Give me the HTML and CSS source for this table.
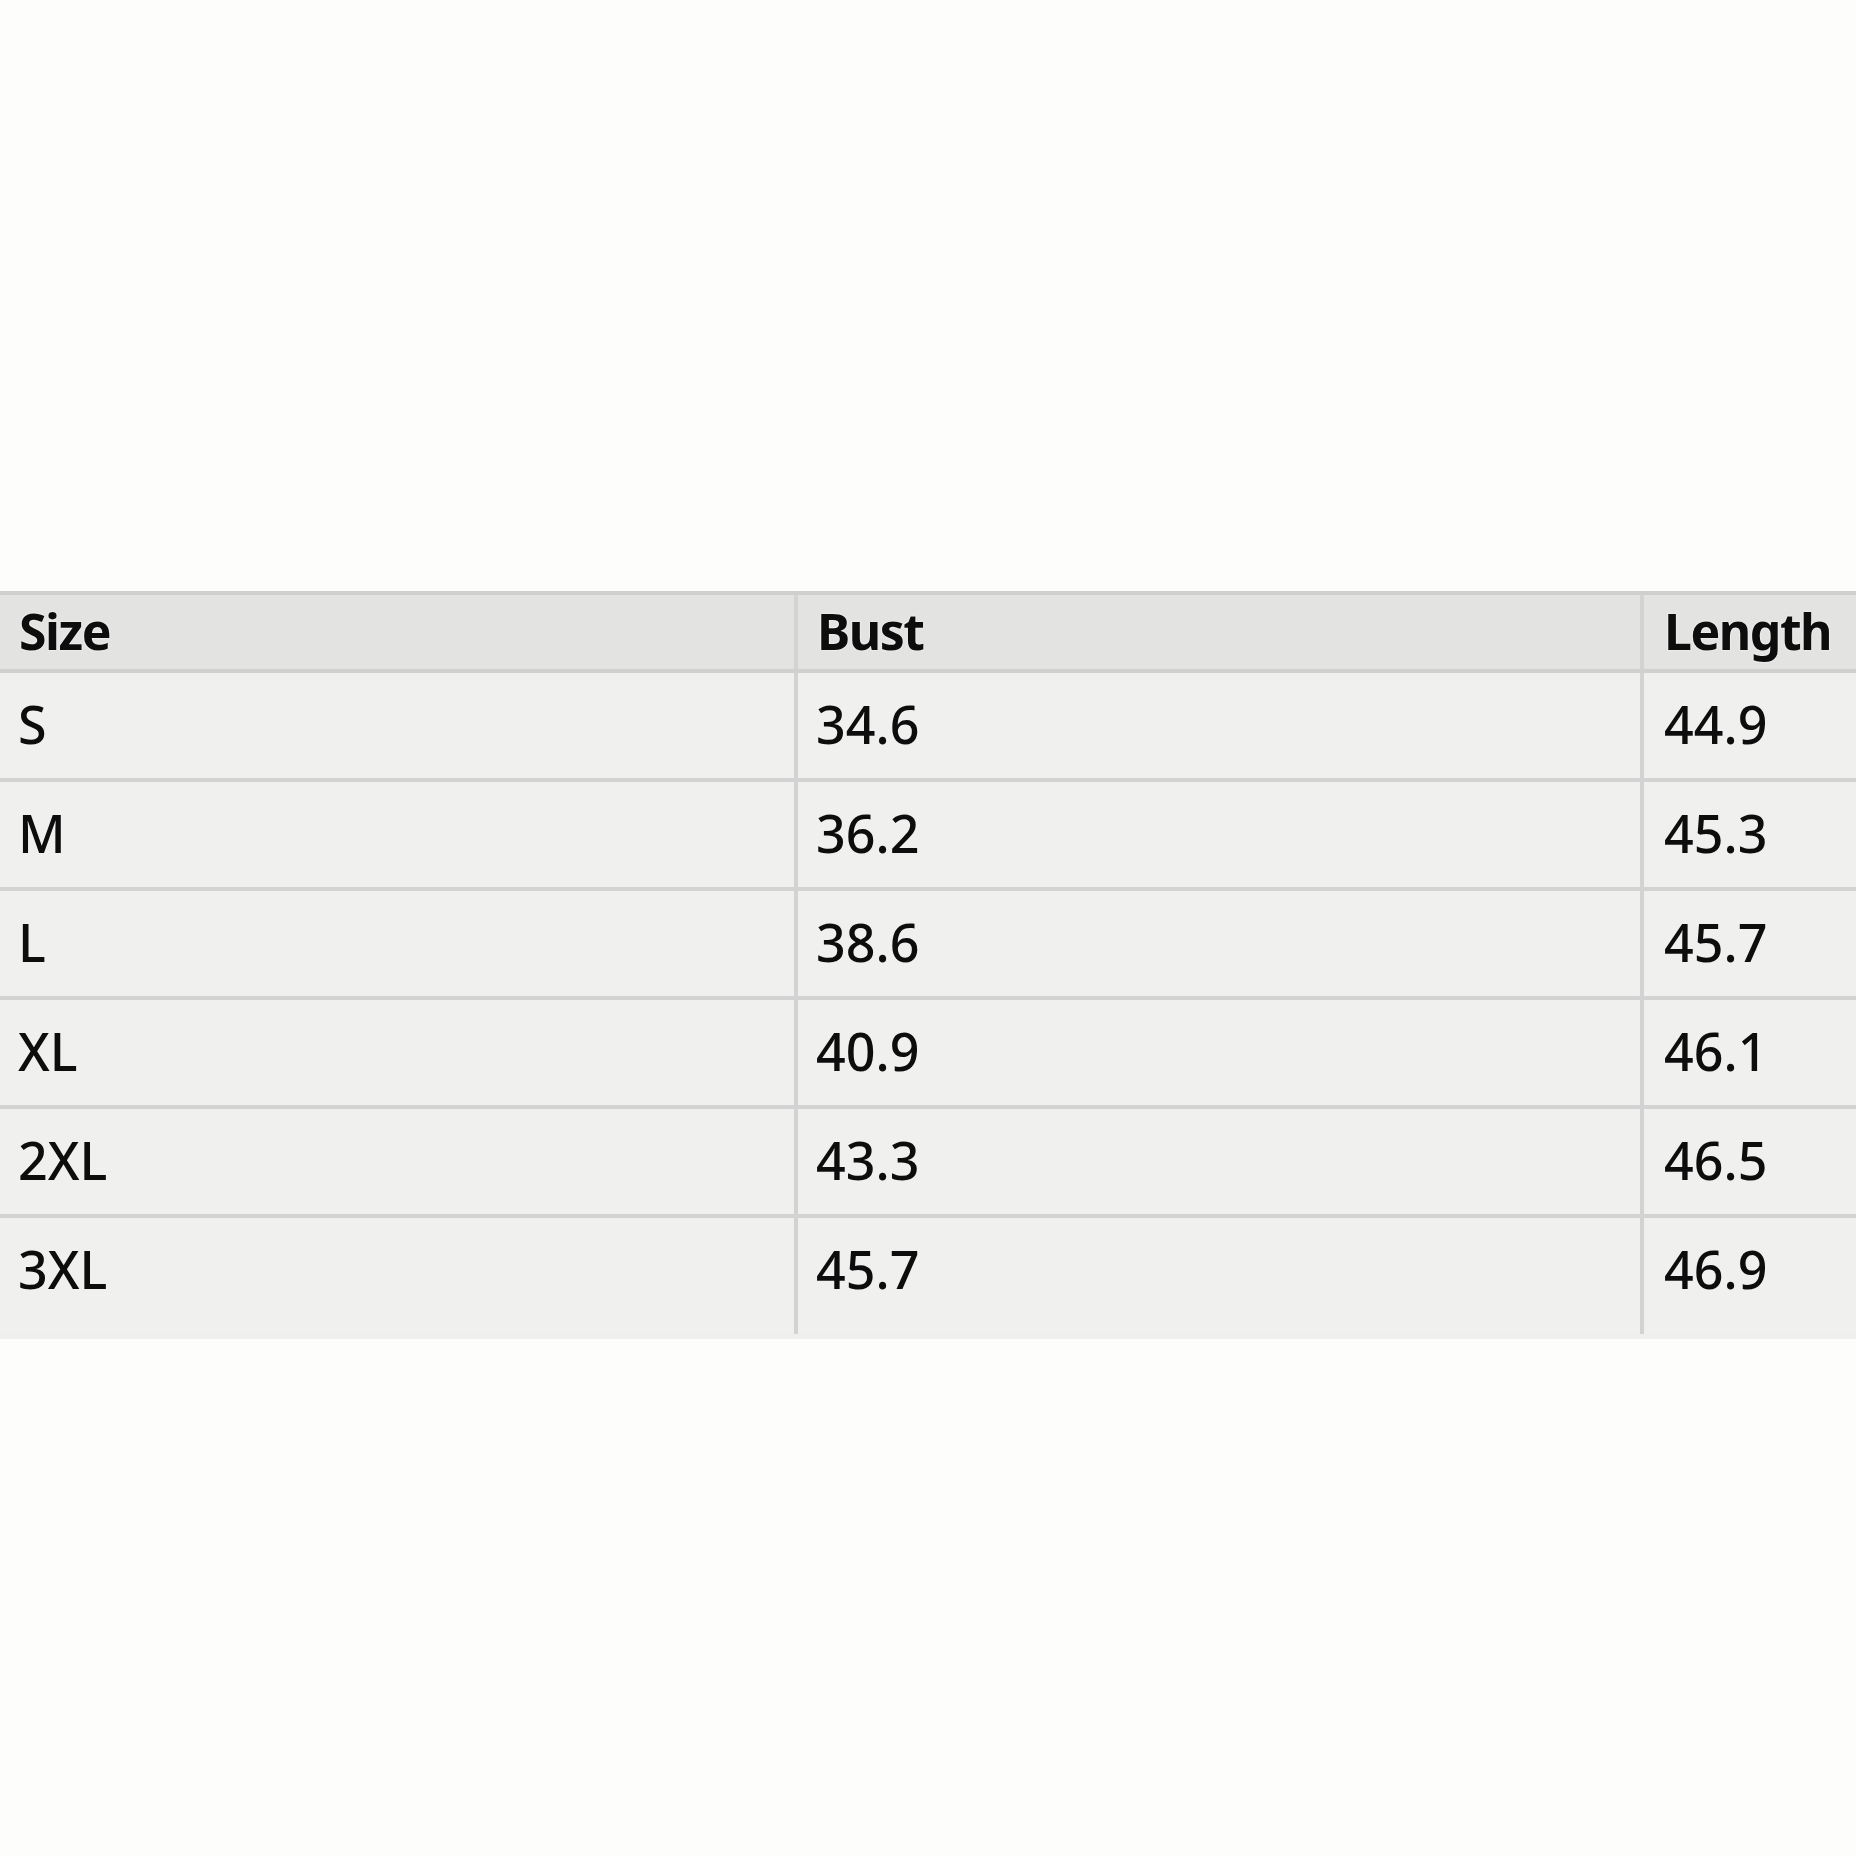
FILE: index.html
```html
<!DOCTYPE html>
<html lang="en">
<head>
<meta charset="utf-8">
<title>Size chart</title>
<link rel="stylesheet" href="styles.css">
</head>
<body>
<main class="page">
  <div class="chart">
    <div class="row head">
      <div class="cell">Size</div>
      <div class="cell">Bust</div>
      <div class="cell last-col">Length</div>
    </div>
    <div class="row">
      <div class="cell">S</div>
      <div class="cell">34.6</div>
      <div class="cell last-col">44.9</div>
    </div>
    <div class="row">
      <div class="cell">M</div>
      <div class="cell">36.2</div>
      <div class="cell last-col">45.3</div>
    </div>
    <div class="row">
      <div class="cell">L</div>
      <div class="cell">38.6</div>
      <div class="cell last-col">45.7</div>
    </div>
    <div class="row">
      <div class="cell">XL</div>
      <div class="cell">40.9</div>
      <div class="cell last-col">46.1</div>
    </div>
    <div class="row">
      <div class="cell">2XL</div>
      <div class="cell">43.3</div>
      <div class="cell last-col">46.5</div>
    </div>
    <div class="row final">
      <div class="cell">3XL</div>
      <div class="cell">45.7</div>
      <div class="cell last-col">46.9</div>
    </div>
  </div>
</main>
</body>
</html>
```

FILE: styles.css
```css
* {
  box-sizing: border-box;
}

html, body {
  margin: 0;
  padding: 0;
  background: #fdfdfb;
}

body {
  width: 1856px;
  height: 1856px;
  overflow: hidden;
  font-family: "Noto Sans", "Open Sans", "DejaVu Sans", sans-serif;
  color: #0d0d0d;
}

.page {
  padding-top: 591px;
}

.chart {
  width: 1856px;
  background: #efefee;
  padding-bottom: 5px;
}

.row {
  display: grid;
  grid-template-columns: 794px 846px 216px;
  height: 109px;
  border-bottom: 4px solid #d3d3d3;
  background: #f0f0ef;
}

.row.head {
  height: 82px;
  border-top: 4px solid #cfcfcf;
  border-bottom: 4px solid #d0d0d0;
  background: #e3e3e2;
  text-shadow: 0 0 2px #ffffff, 0 0 1px #ffffff;
}

.row.final {
  height: 116px;
  border-bottom: none;
}

.cell {
  display: flex;
  align-items: center;
  padding-left: 18px;
  padding-bottom: 4px;
  font-size: 52px;
  font-weight: 500;
  line-height: 1;
  white-space: nowrap;
}

.row.head .cell {
  font-size: 50px;
  font-weight: 700;
  letter-spacing: -1.5px;
  padding-left: 19px;
  padding-bottom: 3px;
}

.cell + .cell {
  border-left: 4px solid #d3d3d3;
}

.row .cell.last-col {
  padding-left: 20px;
}

.row.final .cell {
  padding-bottom: 15px;
}
```
